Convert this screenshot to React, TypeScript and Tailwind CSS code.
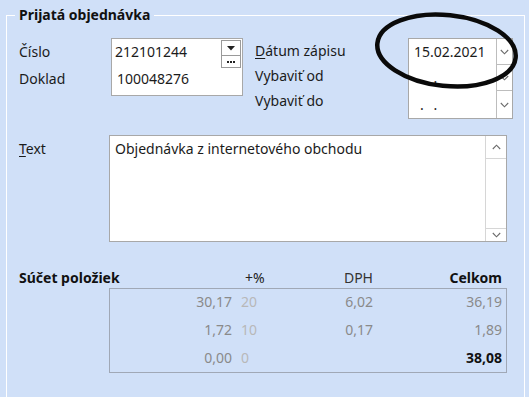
import React from "react";

const Chevron = ({ up = false }: { up?: boolean }) => (
  <svg width="9" height="6" viewBox="0 0 9 6" className={up ? "rotate-180" : ""}>
    <path d="M0.8 1 L4.5 4.8 L8.2 1" fill="none" stroke="#6b6b6b" strokeWidth="1.1" />
  </svg>
);

export default function App() {
  return (
    <div
      className="relative w-[529px] h-[397px] overflow-hidden bg-[#d0e0f8] pl-[6px] pt-[15px] text-[14px] text-[#1b1b1b]"
      style={{ fontFamily: '"Noto Sans", "Open Sans", sans-serif' }}
    >
      <div className="relative w-[519px] h-[400px] border-l border-t border-r border-white pl-[12px] pt-[22px]">
        <div className="absolute -top-[11px] left-[8px] bg-[#d0e0f8] px-[4px] font-bold leading-[20px] text-[#111]">
          Prijatá objednávka
        </div>

        {/* Row 1 */}
        <div className="flex h-[82px]">
          <div className="w-[92px] flex flex-col pt-[2px]">
            <div className="h-[27px] leading-[24px]">Číslo</div>
            <div className="h-[27px] leading-[24px]">Doklad</div>
          </div>
          <div className="flex w-[132px] h-[58px] border border-[#a8a8a8] bg-white">
            <div className="flex-1 flex flex-col pl-[3px] pt-[1px]">
              <div className="h-[27px] leading-[24px]">212101244</div>
              <div className="h-[27px] leading-[24px] pl-[2px]">100048276</div>
            </div>
            <div className="w-[21px] flex flex-col pt-[1px] pr-[1px]">
              <div className="h-[16px] border border-[#9a9a9a] bg-white flex items-center justify-center">
                <svg width="8" height="5" viewBox="0 0 8 5">
                  <path d="M0 0 L8 0 L4 4.5 Z" fill="#222" />
                </svg>
              </div>
              <div className="h-[12px] border border-t-0 border-[#9a9a9a] bg-white flex items-center justify-center gap-[1px]">
                <span className="w-[2px] h-[2px] bg-[#222]" />
                <span className="w-[2px] h-[2px] bg-[#222]" />
                <span className="w-[2px] h-[2px] bg-[#222]" />
              </div>
            </div>
          </div>
          <div className="ml-[12px] w-[153px] flex flex-col pt-[1px]">
            <div className="h-[25px] leading-[24px]">
              <span className="underline underline-offset-2">D</span>átum zápisu
            </div>
            <div className="h-[25px] leading-[24px]">Vybaviť od</div>
            <div className="h-[25px] leading-[24px]">Vybaviť do</div>
          </div>
          <div className="flex w-[105px] h-[81px] border border-[#a8a8a8] bg-white">
            <div className="flex-1 flex flex-col pl-[5px] pt-[1px]">
              <div className="h-[26px] leading-[24px]">15.02.2021</div>
              <div className="h-[26px] leading-[24px] pl-[6px] tracking-[3px]">. .</div>
              <div className="h-[27px] leading-[28px] pl-[6px] tracking-[3px]">. .</div>
            </div>
            <div className="w-[16px] flex flex-col">
              <div className="h-[26px] border-l border-b border-[#bdbdbd] flex items-center justify-center">
                <Chevron />
              </div>
              <div className="h-[26px] border-l border-b border-[#bdbdbd] flex items-center justify-center">
                <Chevron />
              </div>
              <div className="flex-1 border-l border-[#bdbdbd] flex items-center justify-center">
                <Chevron />
              </div>
            </div>
          </div>
        </div>

        {/* Text row */}
        <div className="flex mt-[15px]">
          <div className="w-[90px] pt-[2px] leading-[24px]">
            <span className="underline underline-offset-2">T</span>ext
          </div>
          <div className="flex w-[398px] h-[107px] border border-[#a8a8a8] bg-white">
            <div className="flex-1 pl-[5px] pt-[1px] leading-[24px]">Objednávka z internetového obchodu</div>
            <div className="w-[21px] flex flex-col border-l border-[#d6d6d6]">
              <div className="h-[23px] border-b border-[#d6d6d6] flex items-center justify-center">
                <Chevron up />
              </div>
              <div className="flex-1" />
              <div className="h-[13px] border-t border-[#d6d6d6] flex items-center justify-center">
                <Chevron />
              </div>
            </div>
          </div>
        </div>

        {/* Summary header */}
        <div className="flex mt-[25px] h-[21px] leading-[21px]">
          <div className="w-[90px] font-bold text-[#111] whitespace-nowrap">Súčet položiek</div>
          <div className="grid grid-cols-[122px_9px_60px_72px_129px] pl-[1px]">
            <div />
            <div />
            <div className="pl-[4px] text-[#222]">+%</div>
            <div className="text-right text-[#333]">DPH</div>
            <div className="text-right font-bold text-[#111]">Celkom</div>
          </div>
        </div>

        {/* Summary table */}
        <div className="flex">
          <div className="w-[90px]" />
          <div className="w-[398px] h-[85px] border border-[#a0a8b6]">
            {[
              ["30,17", "20", "6,02", "36,19", false],
              ["1,72", "10", "0,17", "1,89", false],
              ["0,00", "0", "", "38,08", true],
            ].map(([a, b, c, d, bold], i) => (
              <div key={i} className="grid grid-cols-[122px_9px_60px_72px_129px] h-[28px] leading-[26px]">
                <div className="text-right text-[#8a8a8a]">{a as string}</div>
                <div />
                <div className="text-[#b8b8b8]">{b as string}</div>
                <div className="text-right text-[#8a8a8a]">{c as string}</div>
                <div className={bold ? "text-right font-bold text-[#111]" : "text-right text-[#8a8a8a]"}>
                  {d as string}
                </div>
              </div>
            ))}
          </div>
        </div>
      </div>

      {/* hand-drawn ellipse annotation */}
      <svg className="absolute left-0 top-0 pointer-events-none" width="529" height="397">
        <ellipse
          cx="446.5"
          cy="50.5"
          rx="69.5"
          ry="35.5"
          transform="rotate(6 446.5 50.5)"
          fill="none"
          stroke="#0a0a0a"
          strokeWidth="4.5"
        />
      </svg>
    </div>
  );
}
